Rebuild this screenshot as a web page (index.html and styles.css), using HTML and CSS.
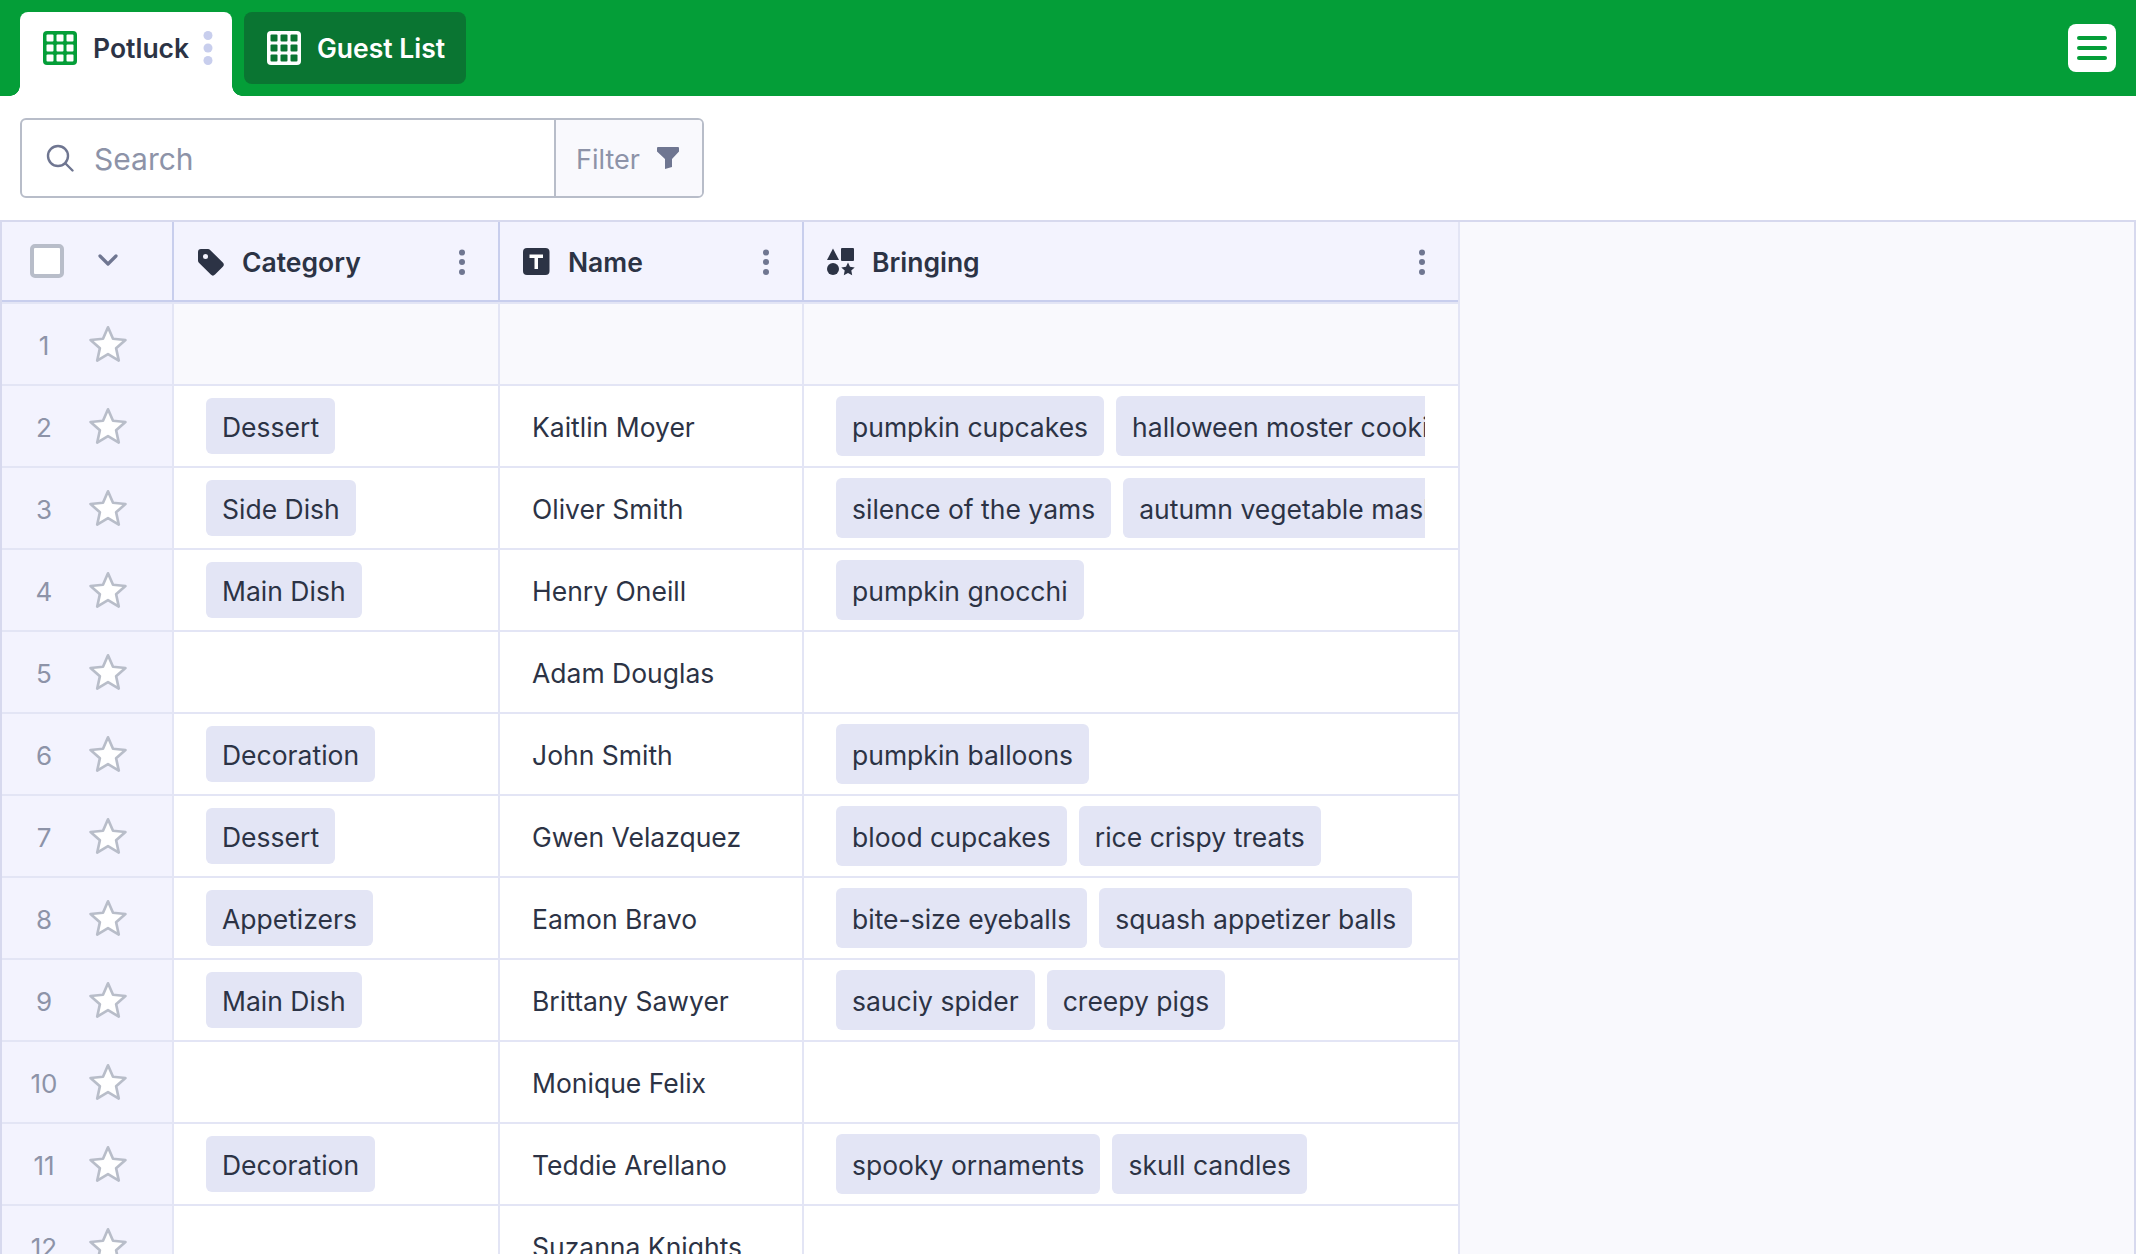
FILE: index.html
```html
<!DOCTYPE html>
<html lang="en">
<head>
<meta charset="utf-8">
<title>Potluck</title>
<link rel="stylesheet" href="styles.css">
</head>
<body>
<svg class="defs" width="0" height="0" aria-hidden="true">
  <symbol id="grid" viewBox="0 0 34 34"><rect width="34" height="34" rx="4" fill="currentColor"/><g><rect x="3.500" y="3.500" width="7" height="7" rx="1"/><rect x="13.500" y="3.500" width="7" height="7" rx="1"/><rect x="23.500" y="3.500" width="7" height="7" rx="1"/><rect x="3.500" y="13.500" width="7" height="7" rx="1"/><rect x="13.500" y="13.500" width="7" height="7" rx="1"/><rect x="23.500" y="13.500" width="7" height="7" rx="1"/><rect x="3.500" y="23.500" width="7" height="7" rx="1"/><rect x="13.500" y="23.500" width="7" height="7" rx="1"/><rect x="23.500" y="23.500" width="7" height="7" rx="1"/></g></symbol>
  <symbol id="star" viewBox="0 0 36 36"><path d="M18 3l4.500 10.300 11.200 1.100-8.400 7.500 2.400 11-9.700-5.700-9.700 5.700 2.400-11-8.400-7.500 11.200-1.100z" fill="#fff" stroke="#b8bdc9" stroke-width="2.400" stroke-linejoin="round"/></symbol>
  <symbol id="dots" viewBox="0 0 10 26"><circle cx="5" cy="3.500" r="3"/><circle cx="5" cy="13" r="3"/><circle cx="5" cy="23" r="3"/></symbol>
  <symbol id="tab-dots" viewBox="0 0 10 34"><circle cx="5" cy="4.500" r="4.500"/><circle cx="5" cy="17" r="4.500"/><circle cx="5" cy="29.500" r="4.500"/></symbol>
</svg>

<header class="topbar">
  <div class="tab tab-active">
    <svg class="tab-icon"><use href="#grid"/></svg>
    <span class="tab-label">Potluck</span>
    <svg class="tab-dots"><use href="#tab-dots"/></svg>
  </div>
  <div class="tab tab-idle">
    <svg class="tab-icon"><use href="#grid"/></svg>
    <span class="tab-label">Guest List</span>
  </div>
  <button class="menu-btn" aria-label="Menu">
    <span class="menu-line"></span><span class="menu-line"></span><span class="menu-line"></span>
  </button>
</header>

<section class="toolbar">
  <div class="searchbox">
    <div class="search-field">
      <svg class="search-icon" viewBox="0 0 28 28"><circle cx="12" cy="12" r="10" fill="none" stroke="#6f7691" stroke-width="2.400"/><path d="M19.500 19.500L26.500 26.500" stroke="#6f7691" stroke-width="2.400" stroke-linecap="round"/></svg>
      <span class="search-text">Search</span>
    </div>
    <div class="filter-btn">
      <span class="filter-text">Filter</span>
      <svg class="filter-icon" viewBox="0 0 22 22"><path d="M0 1a1 1 0 0 1 1-1h20a1 1 0 0 1 1 1v3.500l-7 7.500v8l-7 2V12L0 4.500z" fill="#6f7691"/></svg>
    </div>
  </div>
</section>

<main class="sheet">
  <div class="table">
    <div class="row head-row">
      <div class="gutter head-gutter">
        <span class="checkbox"></span>
        <svg class="chevron" viewBox="0 0 20 12"><path d="M2 2l8 8 8-8" fill="none" stroke="#6f7691" stroke-width="3.200" stroke-linecap="round" stroke-linejoin="round"/></svg>
      </div>
      <div class="cell col-cat head-cell">
        <svg class="head-icon" viewBox="0 0 28 28"><path d="M1 4a3 3 0 0 1 3-3h7a3 3 0 0 1 2.100.900l12.700 12.700a3 3 0 0 1 0 4.200l-7.800 7.800a3 3 0 0 1-4.200 0L1.900 14.700A3 3 0 0 1 1 12.600z" fill="#2c3345"/><circle cx="8.500" cy="8.500" r="2.500" fill="#f3f3fe"/></svg>
        <span class="head-label">Category</span>
        <svg class="head-dots"><use href="#dots"/></svg>
      </div>
      <div class="cell col-name head-cell">
        <svg class="head-icon" viewBox="0 0 28 28"><rect width="26.500" height="27" rx="4" fill="#2c3345"/><path d="M6.500 6.500h13.500v3.500h-5v11h-3.500V10h-5z" fill="#fff"/></svg>
        <span class="head-label">Name</span>
        <svg class="head-dots"><use href="#dots"/></svg>
      </div>
      <div class="cell col-bring head-cell">
        <svg class="head-icon" viewBox="0 0 28 28"><path d="M6 0.500l6 11.500H0z" fill="#2c3345"/><rect x="14" y="0" width="13" height="13" rx="1" fill="#2c3345"/><circle cx="6" cy="21" r="6" fill="#2c3345"/><path d="M21 14.500l2 4.300 4.700.600-3.400 3.200.9 4.700-4.200-2.300-4.200 2.300.9-4.700-3.400-3.200 4.700-.600z" fill="#2c3345"/></svg>
        <span class="head-label">Bringing</span>
        <svg class="head-dots"><use href="#dots"/></svg>
      </div>
    </div>

    <div class="row row-blank">
      <div class="gutter"><span class="num">1</span><svg class="star"><use href="#star"/></svg></div>
      <div class="cell col-cat"></div><div class="cell col-name"></div><div class="cell col-bring"></div>
    </div>
    <div class="row">
      <div class="gutter"><span class="num">2</span><svg class="star"><use href="#star"/></svg></div>
      <div class="cell col-cat"><span class="pill pill-cat">Dessert</span></div>
      <div class="cell col-name"><span class="name">Kaitlin Moyer</span></div>
      <div class="cell col-bring"><div class="pills"><span class="pill">pumpkin cupcakes</span><span class="pill">halloween moster cookies</span></div></div>
    </div>
    <div class="row">
      <div class="gutter"><span class="num">3</span><svg class="star"><use href="#star"/></svg></div>
      <div class="cell col-cat"><span class="pill pill-cat">Side Dish</span></div>
      <div class="cell col-name"><span class="name">Oliver Smith</span></div>
      <div class="cell col-bring"><div class="pills"><span class="pill">silence of the yams</span><span class="pill">autumn vegetable mash</span></div></div>
    </div>
    <div class="row">
      <div class="gutter"><span class="num">4</span><svg class="star"><use href="#star"/></svg></div>
      <div class="cell col-cat"><span class="pill pill-cat">Main Dish</span></div>
      <div class="cell col-name"><span class="name">Henry Oneill</span></div>
      <div class="cell col-bring"><div class="pills"><span class="pill">pumpkin gnocchi</span></div></div>
    </div>
    <div class="row">
      <div class="gutter"><span class="num">5</span><svg class="star"><use href="#star"/></svg></div>
      <div class="cell col-cat"></div>
      <div class="cell col-name"><span class="name">Adam Douglas</span></div>
      <div class="cell col-bring"></div>
    </div>
    <div class="row">
      <div class="gutter"><span class="num">6</span><svg class="star"><use href="#star"/></svg></div>
      <div class="cell col-cat"><span class="pill pill-cat">Decoration</span></div>
      <div class="cell col-name"><span class="name">John Smith</span></div>
      <div class="cell col-bring"><div class="pills"><span class="pill">pumpkin balloons</span></div></div>
    </div>
    <div class="row">
      <div class="gutter"><span class="num">7</span><svg class="star"><use href="#star"/></svg></div>
      <div class="cell col-cat"><span class="pill pill-cat">Dessert</span></div>
      <div class="cell col-name"><span class="name">Gwen Velazquez</span></div>
      <div class="cell col-bring"><div class="pills"><span class="pill">blood cupcakes</span><span class="pill">rice crispy treats</span></div></div>
    </div>
    <div class="row">
      <div class="gutter"><span class="num">8</span><svg class="star"><use href="#star"/></svg></div>
      <div class="cell col-cat"><span class="pill pill-cat">Appetizers</span></div>
      <div class="cell col-name"><span class="name">Eamon Bravo</span></div>
      <div class="cell col-bring"><div class="pills"><span class="pill">bite-size eyeballs</span><span class="pill">squash appetizer balls</span></div></div>
    </div>
    <div class="row">
      <div class="gutter"><span class="num">9</span><svg class="star"><use href="#star"/></svg></div>
      <div class="cell col-cat"><span class="pill pill-cat">Main Dish</span></div>
      <div class="cell col-name"><span class="name">Brittany Sawyer</span></div>
      <div class="cell col-bring"><div class="pills"><span class="pill">sauciy spider</span><span class="pill">creepy pigs</span></div></div>
    </div>
    <div class="row">
      <div class="gutter"><span class="num">10</span><svg class="star"><use href="#star"/></svg></div>
      <div class="cell col-cat"></div>
      <div class="cell col-name"><span class="name">Monique Felix</span></div>
      <div class="cell col-bring"></div>
    </div>
    <div class="row">
      <div class="gutter"><span class="num">11</span><svg class="star"><use href="#star"/></svg></div>
      <div class="cell col-cat"><span class="pill pill-cat">Decoration</span></div>
      <div class="cell col-name"><span class="name">Teddie Arellano</span></div>
      <div class="cell col-bring"><div class="pills"><span class="pill">spooky ornaments</span><span class="pill">skull candles</span></div></div>
    </div>
    <div class="row">
      <div class="gutter"><span class="num">12</span><svg class="star"><use href="#star"/></svg></div>
      <div class="cell col-cat"></div>
      <div class="cell col-name"><span class="name">Suzanna Knights</span></div>
      <div class="cell col-bring"></div>
    </div>
  </div>
</main>
</body>
</html>
```

FILE: styles.css
```css
* { box-sizing: border-box; }
html, body { margin: 0; height: 100%; overflow: hidden; }
body {
  width: 2136px;
  height: 1254px;
  background: #fff;
  color: #2c3345;
  font-family: "Inter", "Liberation Sans", sans-serif;
  font-size: 26.500px;
  display: flex;
  flex-direction: column;
}
.defs { position: absolute; }

.topbar {
  flex: none;
  height: 96px;
  background: #049e38;
  padding: 12px 20px 0;
  display: flex;
  align-items: flex-start;
  gap: 12px;
}
.tab {
  display: flex;
  align-items: center;
  border-radius: 8px;
  padding-left: 23px;
  font-weight: 600;
  font-size: 26.500px;
}
.tab-active {
  position: relative;
  width: 212px;
  height: 84px;
  padding-bottom: 12px;
  background: #fff;
  border-radius: 8px 8px 0 0;
  color: #2c3345;
}
.tab-active::before,
.tab-active::after {
  content: "";
  position: absolute;
  bottom: 0;
  width: 10px;
  height: 10px;
}
.tab-active::before {
  left: -10px;
  background: radial-gradient(circle at 0 0, #049e38 9.500px, #fff 10px);
}
.tab-active::after {
  right: -10px;
  background: radial-gradient(circle at 100% 0, #049e38 9.500px, #fff 10px);
}
.tab-idle {
  width: 222px;
  height: 72px;
  background: #0a7532;
  color: #fff;
}
.tab-icon { width: 34px; height: 34px; flex: none; }
.tab-active .tab-icon { color: #049e38; fill: #fff; }
.tab-idle .tab-icon { color: #fff; fill: #0a7532; }
.tab-label { margin-left: 16px; }
.tab-dots { width: 10px; height: 34px; margin-left: auto; margin-right: 19px; fill: #c8ceed; }

.menu-btn {
  margin: 12px 0 0 auto;
  width: 48px;
  height: 48px;
  border: 0;
  border-radius: 8px;
  background: #fff;
  padding: 0;
  display: flex;
  flex-direction: column;
  align-items: center;
  justify-content: center;
  gap: 6px;
}
.menu-line { width: 30px; height: 4px; border-radius: 2px; background: #049e38; }

.toolbar {
  flex: none;
  height: 124px;
  padding: 22px 20px 0;
}
.searchbox {
  width: 684px;
  height: 80px;
  border: 2px solid #b8bdc9;
  border-radius: 6px;
  display: flex;
  overflow: hidden;
}
.search-field {
  flex: 1;
  display: flex;
  align-items: center;
  padding-left: 24px;
}
.search-icon { width: 28px; height: 28px; flex: none; }
.search-text { margin: 2px 0 0 20px; font-size: 30px; color: #8d93a8; }
.filter-btn {
  flex: none;
  width: 148px;
  border-left: 2px solid #b8bdc9;
  background: #f9f9fd;
  display: flex;
  align-items: center;
  padding-left: 20px;
}
.filter-text { margin-top: 2px; font-size: 27px; color: #8d93a8; }
.filter-icon { width: 22px; height: 22px; margin-left: 17px; }

.sheet {
  flex: 1;
  min-height: 0;
  background: #f9f9fd;
  border-top: 2px solid #d7d9ee;
  border-right: 2px solid #d7d9ee;
}
.table {
  width: 1460px;
  background: #fff;
  border-left: 2px solid #d7d9ee;
  border-right: 2px solid #e3e5f5;
}
.row {
  display: flex;
  height: 82px;
  border-bottom: 2px solid #e3e5f5;
}
.gutter {
  flex: none;
  width: 172px;
  background: #f3f3fe;
  border-right: 2px solid #e3e5f5;
  display: flex;
  align-items: center;
}
.num {
  width: 84px;
  padding-top: 2px;
  text-align: center;
  color: #8d93a8;
  font-size: 26px;
}
.star { width: 40px; height: 40px; flex: none; margin-left: 2px; }
.cell {
  display: flex;
  align-items: center;
  border-right: 2px solid #e3e5f5;
  padding: 0 32px;
  white-space: nowrap;
  min-width: 0;
}
.col-cat { width: 326px; flex: none; }
.col-name { width: 304px; flex: none; }
.col-bring { flex: 1; border-right: 0; padding-right: 33px; }
.name { padding-top: 2px; }
.pill {
  display: inline-flex;
  align-items: center;
  flex: none;
  height: 60px;
  padding: 2px 16px 0;
  border-radius: 6px;
  background: #e3e5f5;
}
.pill-cat { height: 56px; }
.pills { display: flex; gap: 12px; overflow: hidden; width: 100%; }
.row-blank { height: 84px; border-top: 2px solid #e3e5f5; }
.row-blank .cell { background: #f9f9fd; }

.head-row {
  height: 80px;
  background: #f3f3fe;
  border-bottom: 2px solid #c8ceed;
}
.head-gutter { border-right-color: #c8ceed; padding-left: 28px; gap: 34px; }
.checkbox {
  width: 34px;
  height: 34px;
  border: 4px solid #b8bdc9;
  border-radius: 5px;
  background: #fff;
}
.chevron { width: 20px; height: 12px; margin-top: -2px; }
.head-cell { border-right-color: #c8ceed; font-weight: 600; padding: 2px 31px 0 23px; }
.col-bring.head-cell { border-right: 0; }
.head-icon { width: 28px; height: 28px; flex: none; }
.head-label { margin-left: 17px; }
.head-dots { width: 10px; height: 26px; margin-left: auto; fill: #6f7691; }
```
